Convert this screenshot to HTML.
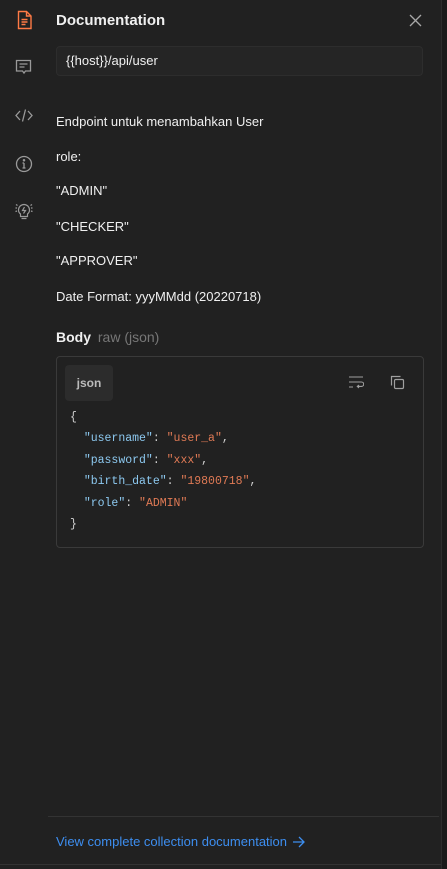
<!DOCTYPE html>
<html><head><meta charset="utf-8"><style>
*{margin:0;padding:0;box-sizing:border-box}
body{width:447px;height:869px;background:#212121;font-family:"Liberation Sans",sans-serif;color:#f0f0f0;position:relative;overflow:hidden}
.a{position:absolute}
.t{font-size:13px;left:56px;line-height:16px}
.code{font-family:"Liberation Mono",monospace;font-size:11.5px;line-height:21.4px;left:70px;top:407px;color:#d0d0d0;white-space:pre}
.k{color:#8dc9f0}.s{color:#e07a55}
</style></head><body>
<div class="a" style="left:441px;top:0;width:6px;height:869px;background:#1a1a1a;border-left:1px solid #2c2c2c"></div>
<svg class="a" style="left:16px;top:10px" width="18" height="20" viewBox="0 0 18 20" fill="none" stroke="#ff7a45" stroke-width="1.4"><path d="M2.5 1.5h8l4.5 4.5v12.5h-12.5z"/><path d="M10.5 1.5v4.5h4.5"/><path d="M5.5 9.5h6M5.5 12h6M5.5 14.5h4"/></svg>
<svg class="a" style="left:15px;top:59px" width="18" height="17" viewBox="0 0 18 17" fill="none" stroke="#9a9a9a" stroke-width="1.3"><path d="M1.5 1.5h14v10.5h-5l-1.5 2l-1.5-2h-6z"/><path d="M4.5 5h8M4.5 8h5"/></svg>
<svg class="a" style="left:15px;top:108px" width="18" height="15" viewBox="0 0 18 15" fill="none" stroke="#9a9a9a" stroke-width="1.3"><path d="M5 3L1 7.5L5 12M13 3l4 4.5L13 12M10.5 1.5l-3 12"/></svg>
<svg class="a" style="left:15px;top:155px" width="18" height="18" viewBox="0 0 18 18" fill="none" stroke="#9a9a9a" stroke-width="1.3"><circle cx="9" cy="9" r="7.5"/><path d="M9 8v5M7.5 13h3M7.5 8H9"/><circle cx="9" cy="5.3" r=".6" fill="#9a9a9a"/></svg>
<svg class="a" style="left:15px;top:201px" width="18" height="20" viewBox="0 0 18 20" fill="none" stroke="#9a9a9a" stroke-width="1.2"><path d="M5.5 13c-1.5-1.2-2-2.5-2-4a5.5 5.5 0 0 1 11 0c0 1.5-.5 2.8-2 4v2.5h-7z"/><path d="M6.5 17.5h5M9.5 6l-2 3.5h3l-2 3"/><path d="M0.5 7h1.5M0.5 10.5l1.5-.5M1 3.5l1.5 1M16 7h1.5M16 10l1.5.5M15.5 4.5l1.5-1"/></svg>
<div class="a" style="left:56px;top:12px;font-size:15px;font-weight:bold;line-height:18px">Documentation</div>
<svg class="a" style="left:409px;top:14px" width="13" height="13" viewBox="0 0 13 13" stroke="#a8a8a8" stroke-width="1.3"><path d="M1 1l11 11M12 1L1 12"/></svg>
<div class="a" style="left:56px;top:46px;width:367px;height:30px;border:1px solid #2d2d2d;background:#252525;border-radius:4px;font-size:13px;padding:6px 0 0 9px">{{host}}/api/user</div>
<div class="a t" style="top:114px">Endpoint untuk menambahkan User</div>
<div class="a t" style="top:149px">role:</div>
<div class="a t" style="top:183px">"ADMIN"</div>
<div class="a t" style="top:219px">"CHECKER"</div>
<div class="a t" style="top:253px">"APPROVER"</div>
<div class="a t" style="top:289px">Date Format: yyyMMdd (20220718)</div>
<div class="a" style="left:56px;top:328px;font-size:14px;line-height:18px"><b>Body</b> <span style="color:#777;margin-left:3px">raw (json)</span></div>
<div class="a" style="left:56px;top:356px;width:368px;height:192px;border:1px solid #3a3a3a;border-radius:4px"></div>
<div class="a" style="left:65px;top:365px;width:48px;height:36px;background:#2c2c2c;border-radius:4px;font-size:12px;font-weight:bold;color:#bbb;text-align:center;line-height:36px">json</div>
<svg class="a" style="left:348px;top:375px" width="16" height="15" viewBox="0 0 16 15" fill="none" stroke="#a0a0a0" stroke-width="1.1"><path d="M1 2h14M1 7h12.5a2.2 2.2 0 0 1 0 4.4h-4M1 12h4M11 10l-1.7 1.4L11 13"/></svg>
<svg class="a" style="left:390px;top:375px" width="15" height="15" viewBox="0 0 15 15" fill="none" stroke="#a0a0a0" stroke-width="1.2"><path d="M1.5 10.5v-9h9"/><rect x="4.5" y="4.5" width="9" height="9" rx="1.2"/></svg>
<div class="a code">{
  <span class="k">"username"</span>: <span class="s">"user_a"</span>,
  <span class="k">"password"</span>: <span class="s">"xxx"</span>,
  <span class="k">"birth_date"</span>: <span class="s">"19800718"</span>,
  <span class="k">"role"</span>: <span class="s">"ADMIN"</span>
}</div>
<div class="a" style="left:48px;top:816px;width:391px;height:1px;background:#333"></div>
<div class="a" style="left:56px;top:834px;font-size:13px;color:#3d8ef0;line-height:16px">View complete collection documentation</div>
<svg class="a" style="left:292px;top:836px" width="13" height="12" viewBox="0 0 13 12" fill="none" stroke="#3d8ef0" stroke-width="1.3"><path d="M1 6h11M7 1l5 5-5 5"/></svg>
<div class="a" style="left:0;top:864px;width:441px;height:1px;background:#333"></div>
</body></html>
